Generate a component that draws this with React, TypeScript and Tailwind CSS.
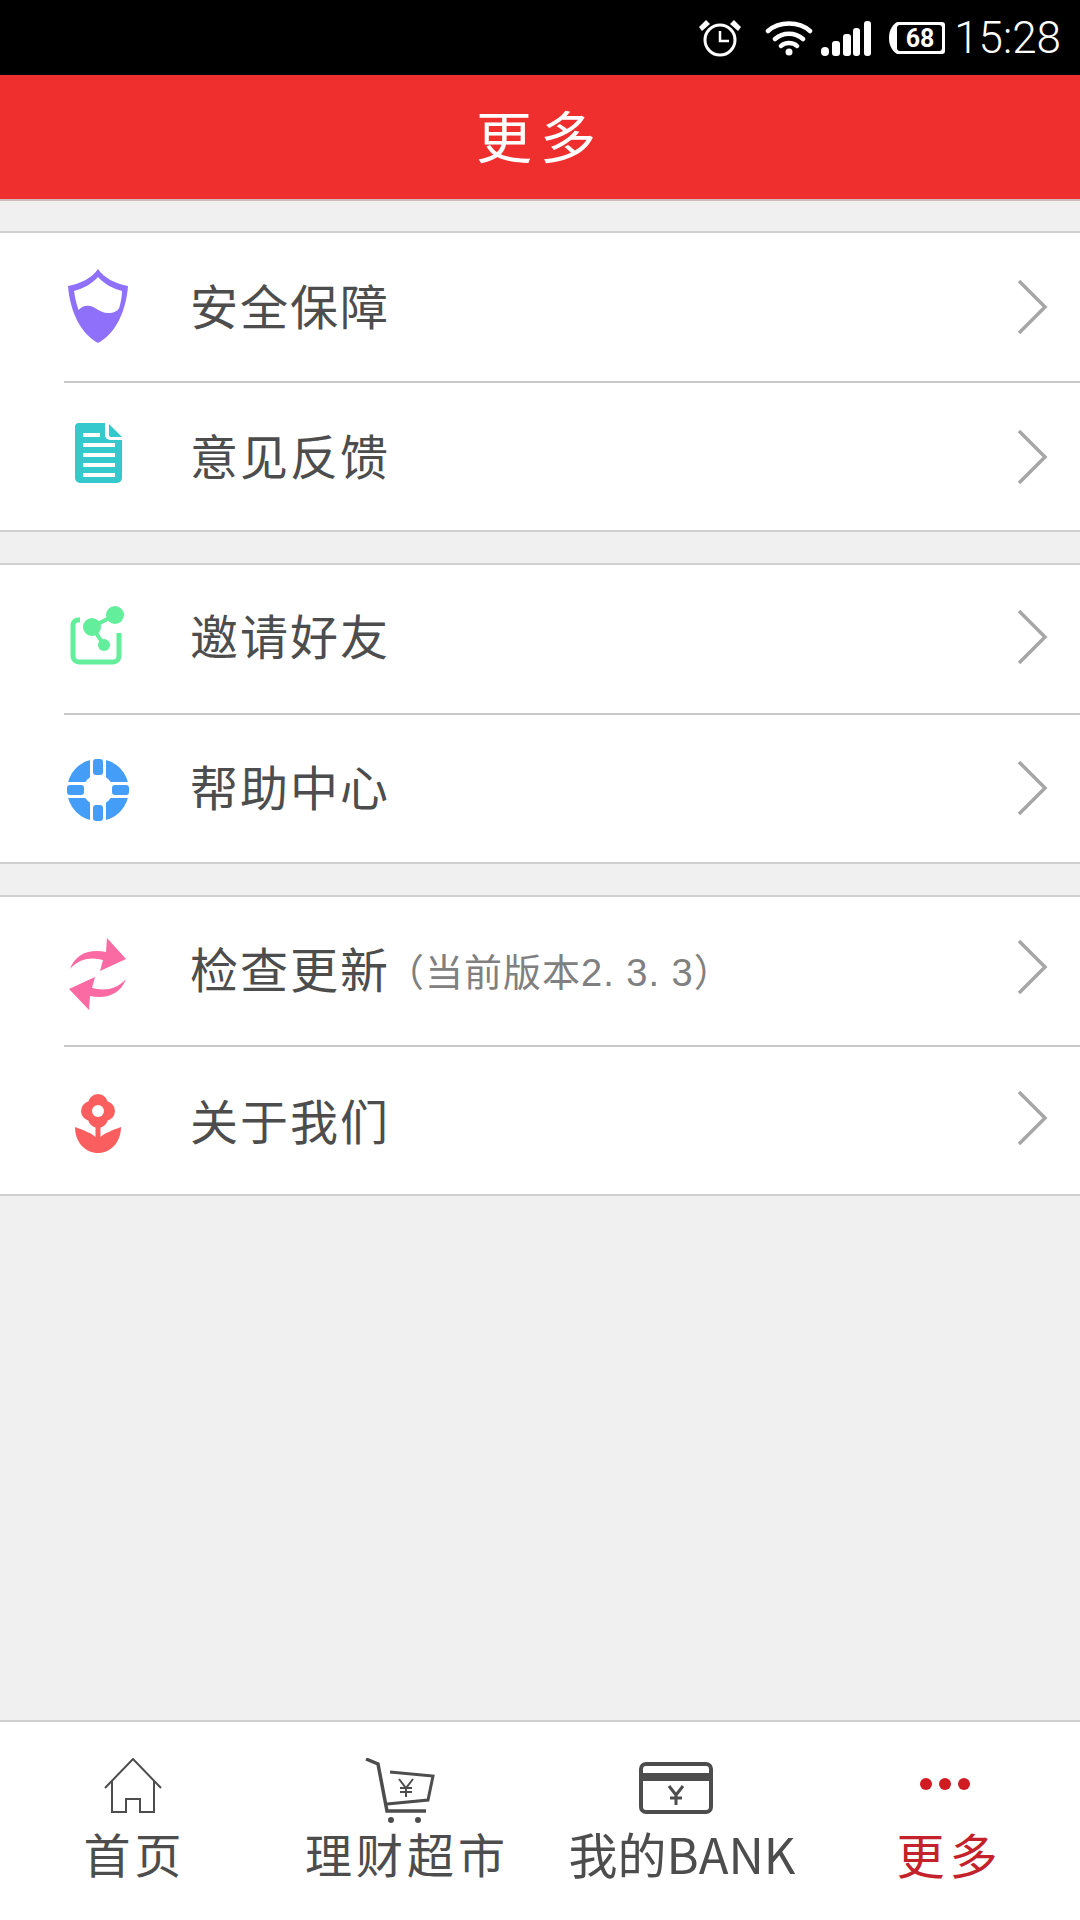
import React from "react";

const cjk = "font-['Noto_Sans_CJK_SC','Noto_Sans',sans-serif]";

const ShieldIcon = () => (
  <svg width="64" height="78" viewBox="0 0 64 78">
    <path d="M32 2 C26 11 14 17 2 19 C4 44 14 66 32 76 C50 66 60 44 62 19 C50 17 38 11 32 2 Z" fill="#8f70fa" />
    <path d="M32 10 C26 17 16 22 8 24 C9 31 10.500 37 12.500 43 C16 39 20 38 24 39 C30 40 34 46 42 46 C48 46 52 44 53.500 40 C55 34 56 29 56 24 C48 22 38 17 32 10 Z" fill="#fff" />
  </svg>
);

const DocIcon = () => (
  <svg width="47" height="60" viewBox="0 0 47 60">
    <path d="M4 0 H30 V12 A5 5 0 0 0 35 17 H47 V55 A5 5 0 0 1 42 60 H5 A5 5 0 0 1 0 55 V4 A4 4 0 0 1 4 0 Z" fill="#35c8cc" />
    <path d="M34 1 L47 14 H36 A2 2 0 0 1 34 12 Z" fill="#35c8cc" />
    <g fill="#fff">
      <rect x="8" y="10" width="17" height="4" />
      <rect x="8" y="20" width="32" height="4" />
      <rect x="8" y="30" width="32" height="4" />
      <rect x="8" y="40" width="32" height="4" />
      <rect x="8" y="50" width="32" height="4" />
    </g>
  </svg>
);

const ShareIcon = () => (
  <svg width="56" height="62" viewBox="0 0 56 62">
    <path d="M10 14 H8 A5 5 0 0 0 3 19 V50 A6 6 0 0 0 9 56 H43 A6 6 0 0 0 49 50 V27" fill="none" stroke="#62ee9a" strokeWidth="5" />
    <path d="M22 21 L45 9 M22 21 L34 39" stroke="#62ee9a" strokeWidth="4" />
    <circle cx="22" cy="21" r="9" fill="#62ee9a" />
    <circle cx="45" cy="9" r="9" fill="#62ee9a" />
    <circle cx="34" cy="39" r="6" fill="#62ee9a" />
  </svg>
);

const RingIcon = () => (
  <svg width="64" height="64" viewBox="0 0 64 64">
    <circle cx="32" cy="32" r="31" fill="#449ef8" />
    <rect x="24" y="0" width="16" height="64" fill="#fff" />
    <rect x="0" y="24" width="64" height="16" fill="#fff" />
    <circle cx="32" cy="32" r="15" fill="#fff" />
    <g fill="#449ef8">
      <rect x="27" y="1" width="10" height="16" rx="3" />
      <rect x="27" y="47" width="10" height="16" rx="3" />
      <rect x="1" y="27" width="17" height="10" rx="3" />
      <rect x="46" y="27" width="17" height="10" rx="3" />
    </g>
  </svg>
);

const RefreshIcon = () => (
  <svg width="60" height="74" viewBox="0 0 60 74">
    <path d="M2 32 C8 16 22 12 38 15 L39 1 L58 22 L32 34 L35 23 C24 20 12 21 2 32 Z" fill="#fb6aa3" />
    <path d="M58 42 C52 58 38 62 22 59 L21 73 L1 52 L27 40 L24 51 C36 54 48 53 58 42 Z" fill="#fb6aa3" />
  </svg>
);

const FlowerIcon = () => (
  <svg width="48" height="60" viewBox="0 0 48 60">
    <circle cx="24" cy="10" r="10" fill="#fb5e5e" />
    <circle cx="24" cy="24" r="10" fill="#fb5e5e" />
    <circle cx="17" cy="17" r="10" fill="#fb5e5e" />
    <circle cx="31" cy="17" r="10" fill="#fb5e5e" />
    <circle cx="24" cy="17" r="6" fill="#fff" />
    <rect x="21.500" y="26" width="5" height="20" fill="#fb5e5e" />
    <path d="M1 33 C9 36 18 39 24 45 C30 39 39 36 47 33 C47 49 36 59 24 59 C12 59 1 49 1 33 Z" fill="#fb5e5e" />
  </svg>
);

const Chevron = ({ className }: { className: string }) => (
  <svg width="32" height="56" viewBox="0 0 32 56" className={`shrink-0 ${className}`}>
    <path d="M3 2 L29 28 L3 54" fill="none" stroke="#a6a6a6" strokeWidth="3.500" />
  </svg>
);

const HomeIcon = () => (
  <svg width="58" height="56" viewBox="0 0 58 56" className="mr-[3px]">
    <path d="M1 30 L29 1 L57 30" fill="none" stroke="#4d4d4d" strokeWidth="2" />
    <path d="M8 23 V54 H22 V41 H36 V54 H50 V23" fill="none" stroke="#4d4d4d" strokeWidth="2" />
  </svg>
);

const CartIcon = () => (
  <svg width="70" height="66" viewBox="0 0 70 66" className="mr-[14px] -mb-[10px]">
    <path d="M1 1 L13 6 L22 53 H61" fill="none" stroke="#4d4d4d" strokeWidth="3.500" />
    <path d="M25 14 L68 18 L63 42 L22 46" fill="none" stroke="#4d4d4d" strokeWidth="3" />
    <path d="M34 21 L41 30 L48 21 M41 30 V39 M35 30 H47 M35 34 H47" fill="none" stroke="#4d4d4d" strokeWidth="2" />
    <circle cx="26" cy="62" r="3" fill="#4d4d4d" />
    <circle cx="53" cy="62" r="3" fill="#4d4d4d" />
  </svg>
);

const CardIcon = () => (
  <svg width="74" height="52" viewBox="0 0 74 52" className="mr-[12px]">
    <rect x="2" y="2" width="70" height="48" rx="5" fill="none" stroke="#4d4d4d" strokeWidth="4" />
    <rect x="1" y="11" width="72" height="8" fill="#4d4d4d" />
    <path d="M30 24 L37 33 L44 24 M37 33 V43 M31 36 H43" fill="none" stroke="#4d4d4d" strokeWidth="3" />
  </svg>
);

const StatusIcons = () => (
  <>
    <svg width="44" height="38" viewBox="0 0 44 38" className="mr-[23px]">
      <circle cx="22" cy="21" r="15" fill="none" stroke="#fff" strokeWidth="3" />
      <path d="M22 12 V22 H31" fill="none" stroke="#fff" strokeWidth="2.500" />
      <path d="M1 8 L8 1 L12 5 L4 12 Z M43 8 L36 1 L32 5 L40 12 Z" fill="#fff" />
    </svg>
    <svg width="48" height="36" viewBox="0 0 48 36" className="mr-[8px]">
      <path d="M3 11 C14 1 34 1 45 11 M10 19 C18 12 30 12 38 19 M16 26 C20 22 28 22 32 26" fill="none" stroke="#fff" strokeWidth="4.500" strokeLinecap="round" />
      <circle cx="24" cy="32" r="3.500" fill="#fff" />
    </svg>
    <svg width="50" height="36" viewBox="0 0 50 36" className="mr-[17px]">
      <rect x="0" y="27" width="8" height="9" rx="4" fill="#fff" />
      <rect x="11" y="21" width="8" height="15" rx="3" fill="#fff" />
      <rect x="22" y="14" width="8" height="22" rx="3" fill="#fff" />
      <rect x="32" y="8" width="7" height="28" rx="3" fill="#fff" />
      <rect x="43" y="1" width="7" height="35" rx="3" fill="#fff" />
    </svg>
    <svg width="58" height="34" viewBox="0 0 58 34" className="mr-[8px]">
      <path d="M9 1 H54 A3 3 0 0 1 57 4 V30 A3 3 0 0 1 54 33 H9 C3 29 1 23 1 17 C1 11 3 5 9 1 Z" fill="#fff" />
      <rect x="9" y="4" width="45" height="26" rx="3" fill="#000" />
      <text x="32" y="26" textAnchor="middle" fontSize="25" fontWeight="700" fill="#fff" fontFamily="Roboto, sans-serif">68</text>
    </svg>
  </>
);

interface Row {
  icon: React.ReactNode;
  iconCls: string;
  chevCls: string;
  textCls: string;
  title: string;
  note?: string;
}

const groups: Row[][] = [
  [
    { icon: <ShieldIcon />, iconCls: "mb-[2px]", chevCls: "", textCls: "pb-[6px]", title: "安全保障" },
    { icon: <DocIcon />, iconCls: "mb-[8px]", chevCls: "", textCls: "pb-[6px]", title: "意见反馈" },
  ],
  [
    { icon: <ShareIcon />, iconCls: "mb-[4px]", chevCls: "mb-[4px]", textCls: "pb-[10px]", title: "邀请好友" },
    { icon: <RingIcon />, iconCls: "mt-[2px]", chevCls: "mb-[2px]", textCls: "pb-[8px]", title: "帮助中心" },
  ],
  [
    { icon: <RefreshIcon />, iconCls: "mt-[6px]", chevCls: "mb-[8px]", textCls: "pb-[8px]", title: "检查更新", note: "（当前版本2. 3. 3）" },
    { icon: <FlowerIcon />, iconCls: "mt-[6px]", chevCls: "mb-[6px]", textCls: "pb-[4px]", title: "关于我们" },
  ],
];

const tabs = [
  { icon: <HomeIcon />, label: "首页", cls: "text-[47px] tracking-[4px] text-[#4d4d4d]" },
  { icon: <CartIcon />, label: "理财超市", cls: "text-[47px] tracking-[4px] text-[#4d4d4d]" },
  { icon: <CardIcon />, label: "我的BANK", cls: "text-[49px] text-[#4d4d4d]" },
  {
    icon: (
      <div className="flex gap-[7px] h-[16px] mb-[20px] mr-[10px]">
        <span className="w-[12px] h-[12px] rounded-full bg-[#cf1b21]" />
        <span className="w-[12px] h-[12px] rounded-full bg-[#cf1b21]" />
        <span className="w-[12px] h-[12px] rounded-full bg-[#cf1b21]" />
      </div>
    ),
    label: "更多",
    cls: "text-[48px] tracking-[5px] text-[#c4222a]",
  },
];

export default function App() {
  return (
    <div className={`w-[1080px] h-[1920px] flex flex-col bg-[#f0f0f0] ${cjk}`}>
      <div className="h-[75px] bg-black flex items-center justify-end pr-[19px]">
        <StatusIcons />
        <span className="text-[44px] leading-none text-white font-light font-['Roboto',sans-serif]">15:28</span>
      </div>
      <div className="h-[126px] bg-[#ef2e2e] border-b-2 border-[#d0bcbc] flex items-center justify-center text-white text-[56px] tracking-[8px] pb-[6px]">
        更多
      </div>

      {groups.map((rows, i) => (
        <div key={i} className={`${i === 0 ? "mt-[30px]" : "mt-[31px]"} bg-white border-y-2 border-[#d0d0d0]`}>
          {rows.map((row, j) => (
            <div key={row.title} className="pl-[64px]">
              <div className={`flex items-center pr-[32px] ${j === 0 ? "h-[150px] border-b-2 border-[#c8c8c8]" : "h-[147px]"}`}>
                <div className={`w-[68px] flex justify-center shrink-0 ${row.iconCls}`}>{row.icon}</div>
                <div className={`ml-[58px] flex-1 flex items-center text-[#4d4d4d] text-[48px] tracking-[2px] ${row.textCls}`}>
                  {row.title}
                  {row.note && (
                    <span className="text-[38px] tracking-[1px] mt-[12px] -ml-[4px] text-[#808080] font-['Liberation_Sans','Noto_Sans_CJK_SC',sans-serif]">
                      {row.note}
                    </span>
                  )}
                </div>
                <Chevron className={row.chevCls} />
              </div>
            </div>
          ))}
        </div>
      ))}

      <div className="flex-1" />

      <div className="h-[200px] bg-white border-t-2 border-[#cfcfcf] grid grid-cols-[269px_276px_274px_261px] pt-[26px]">
        {tabs.map((t) => (
          <div key={t.label} className="flex flex-col items-center">
            <div className="h-[66px] flex items-end justify-center">{t.icon}</div>
            <div className={`mt-[9px] leading-[60px] whitespace-nowrap ${t.cls}`}>{t.label}</div>
          </div>
        ))}
      </div>
    </div>
  );
}
